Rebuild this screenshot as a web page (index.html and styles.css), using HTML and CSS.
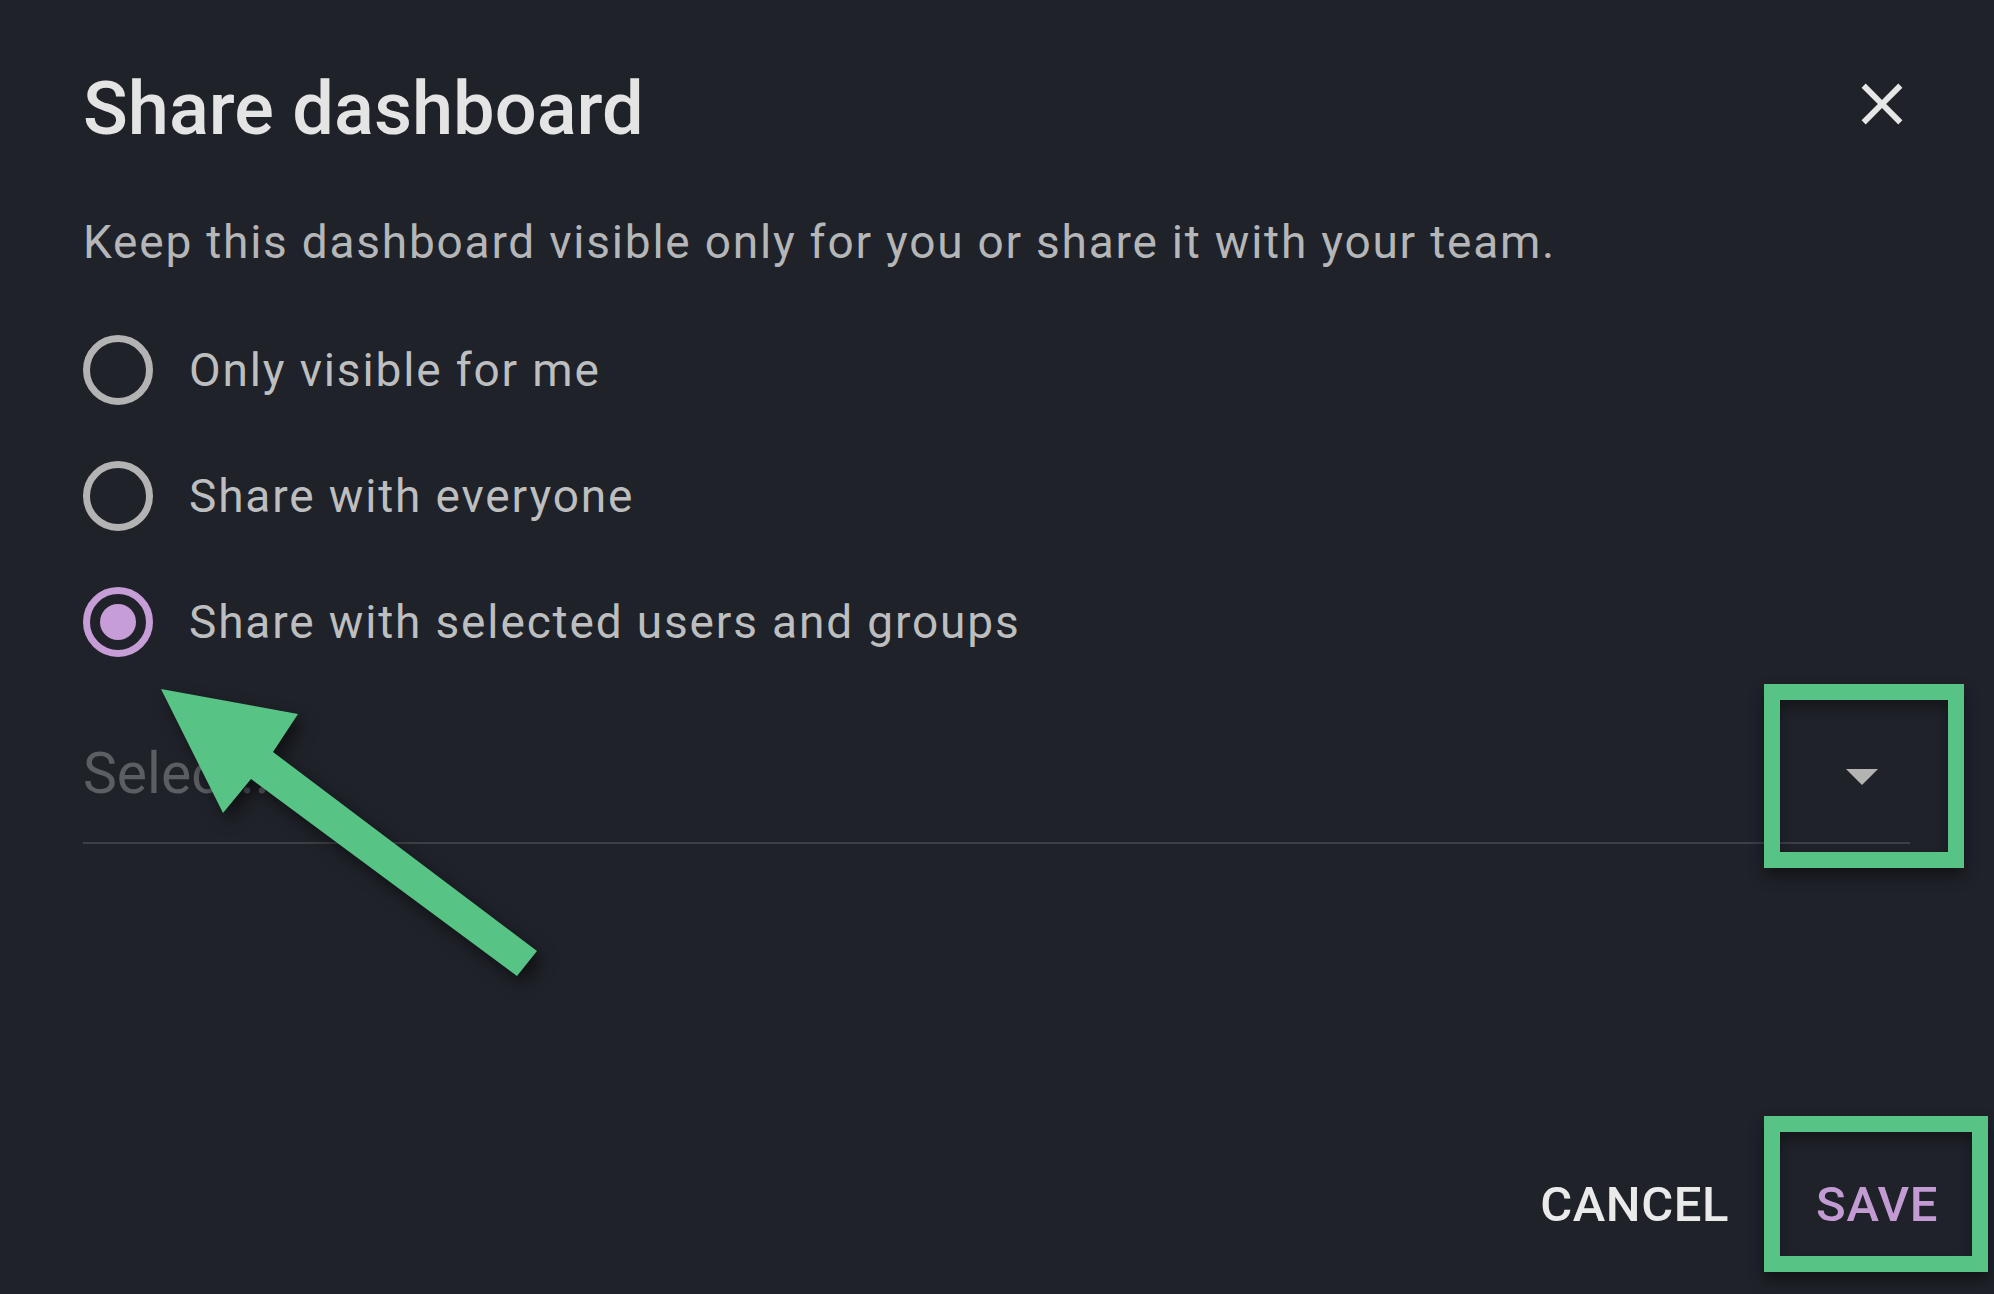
FILE: index.html
```html
<!DOCTYPE html>
<html lang="en">
<head>
<meta charset="utf-8">
<title>Share dashboard</title>
<link rel="stylesheet" href="styles.css">
</head>
<body>
<div class="dialog">
  <div class="dialog-title">
    <h2>Share dashboard</h2>
    <button class="close" title="Close">
      <svg viewBox="0 0 24 24" width="70" height="70"><path d="M19 6.41 17.59 5 12 10.59 6.41 5 5 6.41 10.59 12 5 17.59 6.41 19 12 13.41 17.59 19 19 17.59 13.41 12z" fill="currentColor"/></svg>
    </button>
  </div>
  <div class="dialog-content">
    <p class="intro">Keep this dashboard visible only for you or share it with your team.</p>
    <div class="radios">
      <label class="radio"><span class="ring"></span>Only visible for me</label>
      <label class="radio"><span class="ring"></span>Share with everyone</label>
      <label class="radio checked"><span class="ring"><span class="dot"></span></span>Share with selected users and groups</label>
    </div>
    <div class="select">
      <span class="placeholder">Select...</span>
      <span class="caret"></span>
    </div>
  </div>
  <div class="dialog-actions">
    <button class="btn">Cancel</button>
    <button class="btn primary">Save</button>
  </div>
</div>

<!-- annotations -->
<div class="mark mark-caret"></div>
<div class="mark mark-save"></div>
<svg class="arrow" width="1994" height="1294" viewBox="0 0 1994 1294">
  <polygon points="161,689 298,714 273,752 537,951 517,976 251,779 223,813" fill="#57c486"/>
</svg>
</body>
</html>
```

FILE: styles.css
```css
html, body{
	margin:0;
	padding:0;
	height:100%;
}
body{
	background:#1f2229;
	font-family:Roboto, "Liberation Sans", sans-serif;
	overflow:hidden;
}
.dialog{
	height:100vh;
	display:flex;
	flex-direction:column;
	box-sizing:border-box;
	padding-bottom:60px;
}
.dialog-title{
	display:flex;
	justify-content:space-between;
	align-items:flex-start;
	padding:64px 77px 0 83px;
}
.dialog-title h2{
	margin:0;
	font-size:74px;
	line-height:89px;
	font-weight:500;
	color:#e4e4e4;
}
.close{
	background:none;
	border:none;
	padding:0;
	margin-top:5px;
	width:70px;
	height:70px;
	color:#e6e6e6;
	cursor:pointer;
}
.close svg{
	display:block;
}
.dialog-content{
	padding:0 84px 0 83px;
}
.intro{
	margin:55px 0 0;
	font-size:46px;
	line-height:69px;
	letter-spacing:1.78px;
	color:#b5b6b8;
}
.radios{
	margin-top:30px;
	display:flex;
	flex-direction:column;
}
.radio{
	height:126px;
	display:flex;
	align-items:center;
	gap:36px;
	font-size:46px;
	line-height:69px;
	letter-spacing:1.85px;
	color:#bdbebf;
}
.ring{
	width:70px;
	height:70px;
	box-sizing:border-box;
	border:7px solid #b3b3b4;
	border-radius:50%;
	display:flex;
	align-items:center;
	justify-content:center;
}
.checked .ring{
	border-color:#c69dd6;
}
.dot{
	width:36px;
	height:36px;
	border-radius:50%;
	background:#c69dd6;
}
.select{
	margin-top:55px;
	display:flex;
	align-items:center;
	justify-content:space-between;
	padding-bottom:34px;
	border-bottom:2px solid #3c3f45;
}
.placeholder{
	font-size:57px;
	line-height:68px;
	color:#5b5e63;
}
.caret{
	width:0;
	height:0;
	border-left:16px solid transparent;
	border-right:16px solid transparent;
	border-top:16px solid #b3b3b4;
	margin:5px 32px 0 0;
}
.dialog-actions{
	margin-top:auto;
	display:flex;
	justify-content:flex-end;
	gap:47px;
	padding-right:36px;
}
.btn{
	background:none;
	border:none;
	padding:0 20px;
	font-family:inherit;
	font-size:49px;
	line-height:58px;
	font-weight:500;
	letter-spacing:0.6px;
	text-transform:uppercase;
	color:#eaeaea;
	cursor:pointer;
}
.btn.primary{
	color:#c39bd3;
}
.mark{
	position:absolute;
	box-sizing:border-box;
	border:16px solid #57c486;
	box-shadow:0 8px 14px rgba(0,0,0,.45), inset 0 8px 12px rgba(0,0,0,.35);
}
.mark-caret{
	left:1764px;
	top:684px;
	width:200px;
	height:184px;
}
.mark-save{
	left:1764px;
	top:1116px;
	width:224px;
	height:156px;
}
.arrow{
	position:absolute;
	left:0;
	top:0;
	pointer-events:none;
	filter:drop-shadow(6px 8px 8px rgba(0,0,0,.5));
}
```
